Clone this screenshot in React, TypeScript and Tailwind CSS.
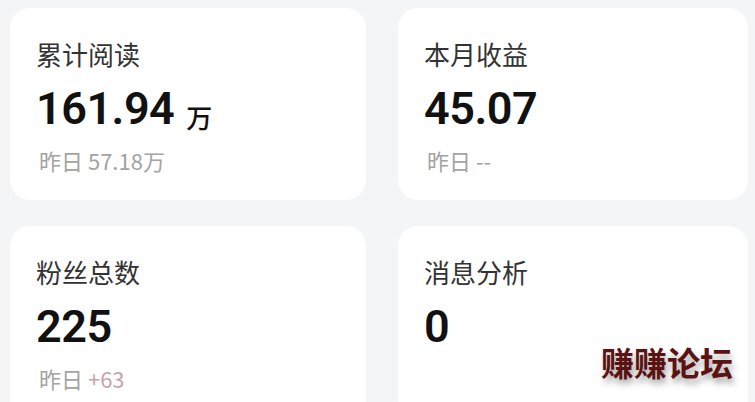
import React from "react";

const cjk = { fontFamily: '"Noto Sans CJK SC", "Noto Sans", sans-serif' };
const num = { fontFamily: 'Roboto, "Noto Sans CJK SC", sans-serif' };

function Card({ title, value, unit, sub }: { title: string; value: string; unit?: string; sub: React.ReactNode }) {
  return (
    <div className="bg-white rounded-[20px] pl-[26px] pt-[29px] h-[192px]">
      <div className="text-[26px] leading-[34px] text-[#333333]" style={cjk}>{title}</div>
      <div className="mt-[15px] flex items-baseline h-[46px]">
        <span className="text-[45px] leading-[46px] font-[600] text-[#111111] tracking-[-0.5px]" style={num}>{value}</span>
        {unit && <span className="ml-[12px] text-[26px] leading-[26px] font-medium text-[#111111] relative top-[4px]" style={cjk}>{unit}</span>}
      </div>
      <div className="mt-[14px] text-[22px] leading-[28px] text-[#a3a3a3] pl-[3px]" style={cjk}>{sub}</div>
    </div>
  );
}

export default function App() {
  return (
    <div className="relative w-[755px] h-[402px] overflow-hidden bg-[#f4f5f7]">
      <div className="grid grid-cols-[356px_350px] gap-x-[32px] gap-y-[26px] pl-[10px] pt-[8px]">
        <Card title="累计阅读" value="161.94" unit="万" sub={<>昨日 57.18万</>} />
        <Card title="本月收益" value="45.07" sub={<>昨日 --</>} />
        <Card title="粉丝总数" value="225" sub={<>昨日 <span className="text-[#c9a3ab]">+63</span></>} />
        <Card title="消息分析" value="0" sub={<span className="invisible">昨日</span>} />
      </div>
      <div
        className="absolute left-[601px] top-[341px] text-[33px] leading-[42px] font-bold text-[#5a1212] [text-shadow:2px_5px_6px_rgba(0,0,0,0.35)]"
        style={cjk}
      >
        赚赚论坛
      </div>
    </div>
  );
}
